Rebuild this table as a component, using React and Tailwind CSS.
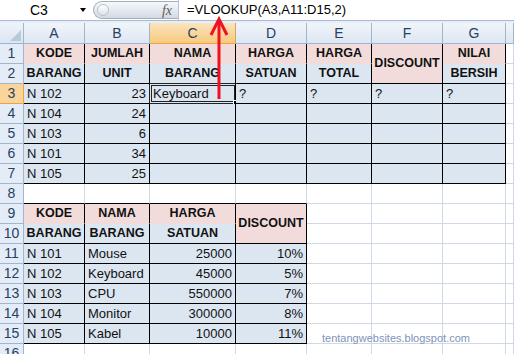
const PINK = 'pink';
const BLUE = 'blue';

// column widths: row header, A..G, then a sliver of H
const GRID = 'grid grid-cols-[24px_61px_65px_86px_71px_65px_71px_63px_8px] grid-rows-[21px_repeat(16,20px)]';

const upperHead1 = ['KODE', 'JUMLAH', 'NAMA', 'HARGA', 'HARGA', 'DISCOUNT', 'NILAI'];
const upperHead2 = ['BARANG', 'UNIT', 'BARANG', 'SATUAN', 'TOTAL', null, 'BERSIH'];
const stock = [
  ['N 102', '23'],
  ['N 104', '24'],
  ['N 103', '6'],
  ['N 101', '34'],
  ['N 105', '25'],
];
const products = [
  ['N 101', 'Mouse', '25000', '10%'],
  ['N 102', 'Keyboard', '45000', '5%'],
  ['N 103', 'CPU', '550000', '7%'],
  ['N 104', 'Monitor', '300000', '8%'],
  ['N 105', 'Kabel', '10000', '11%'],
];

// returns null for cells covered by a merged cell
function cellSpec(row, col) {
  const blank = { text: '', fill: null, rb: false, bb: false };
  // upper table A1:G7
  if (row <= 7 && col <= 6) {
    if (row === 1) {
      if (col === 5) return { text: 'DISCOUNT', fill: PINK, bold: true, align: 'center', rb: true, bb: true, span: true };
      return { text: upperHead1[col], fill: PINK, bold: true, align: 'center', rb: true, bb: false };
    }
    if (row === 2) {
      if (col === 5) return null;
      return { text: upperHead2[col], fill: BLUE, bold: true, align: 'center', rb: true, bb: true };
    }
    const r = stock[row - 3];
    let text = '';
    let align = 'left';
    if (col === 0) text = r[0];
    if (col === 1) { text = r[1]; align = 'right'; }
    if (row === 3 && col === 2) text = 'Keyboard';
    if (row === 3 && col >= 3) text = '?';
    return { text, fill: BLUE, align, rb: true, bb: true, selected: row === 3 && col === 2 };
  }
  // top edge of the lower table
  if (row === 8 && col <= 3) return { ...blank, bb: true };
  // lower table A9:D15
  if (row >= 9 && row <= 15 && col <= 3) {
    if (row === 9) {
      if (col === 3) return { text: 'DISCOUNT', fill: PINK, bold: true, align: 'center', rb: true, bb: true, span: true };
      return { text: ['KODE', 'NAMA', 'HARGA'][col], fill: PINK, bold: true, align: 'center', rb: true, bb: false };
    }
    if (row === 10) {
      if (col === 3) return null;
      return { text: ['BARANG', 'BARANG', 'SATUAN'][col], fill: BLUE, bold: true, align: 'center', rb: true, bb: true };
    }
    const p = products[row - 11];
    return { text: p[col], fill: BLUE, align: col >= 2 ? 'right' : 'left', rb: true, bb: true };
  }
  return blank;
}

function Cell({ spec }) {
  const bg = spec.fill === PINK ? 'bg-[#f2dcdb]' : spec.fill === BLUE ? 'bg-[#dce6f1]' : 'bg-white';
  const right = spec.rb ? 'border-r-black' : 'border-r-[#d0d7e5]';
  const bottom = spec.bb
    ? 'border-b-black'
    : spec.fill === PINK
      ? 'border-b-[#f2dcdb]'
      : spec.fill === BLUE
        ? 'border-b-[#dce6f1]'
        : 'border-b-[#d0d7e5]';
  const justify = spec.align === 'center' ? 'justify-center' : spec.align === 'right' ? 'justify-end' : 'justify-start';
  const weight = spec.bold ? 'font-bold text-[12.5px]' : 'text-[13px]';
  return (
    <div
      className={`relative flex items-center px-[3px] border-r border-b whitespace-nowrap text-[#111] ${bg} ${right} ${bottom} ${justify} ${weight} ${spec.span ? 'row-span-2' : ''}`}
    >
      {spec.text}
      {spec.selected && (
        <div className="absolute -left-[1px] -top-[1px] w-[88px] h-[21px] border-[3px] border-double border-[#222]">
          <div className="absolute -right-[4px] -bottom-[4px] w-[5px] h-[5px] bg-black border border-white" />
        </div>
      )}
    </div>
  );
}

function FormulaBar() {
  return (
    <div className="h-[20px] flex bg-white text-[13px] text-black">
      <div className="w-[93px] flex items-center">
        <span className="ml-[30px] text-[14px]">C3</span>
        <span className="ml-auto mr-[7px] w-0 h-0 border-x-[3.5px] border-x-transparent border-t-[4px] border-t-black" />
      </div>
      <div className="w-[85px] my-[1px] flex items-center rounded-l-full border border-r-0 border-[#a3aebb] bg-linear-to-b from-[#f7f9fb] to-[#d3dae3]">
        <span className="ml-[3px] w-[12px] h-[12px] rounded-full border border-[#b7c0cb] bg-linear-to-b from-[#ffffff] to-[#dde3ea]" />
        <span className="ml-auto mr-[6px] italic font-['Liberation_Serif',serif] text-[14px] text-[#606060]">fx</span>
      </div>
      <div className="flex-1 flex items-center pl-[8px] border-l border-[#b6c2d1]">
        =VLOOKUP(A3,A11:D15,2)
      </div>
    </div>
  );
}

function Sheet() {
  const cols = ['A', 'B', 'C', 'D', 'E', 'F', 'G', ''];
  const rows = Array.from({ length: 16 }, (_, i) => i + 1);
  return (
    <div className={GRID}>
      <div className="relative border-r border-b border-[#9eb6ce] bg-linear-to-b from-[#eef3fa] to-[#dce5f1]">
        <div className="absolute right-[2px] bottom-[2px] w-0 h-0 border-l-[11px] border-l-transparent border-b-[11px] border-b-[#b9c9dc]" />
      </div>
      {cols.map((c, i) =>
        i === 2 ? (
          <div key={c} className="flex items-center justify-center text-[14px] text-[#27415f] border-r border-r-[#d9a55a] border-b border-b-[#f0a43c] bg-linear-to-b from-[#fbe4bd] to-[#f6c97e]">
            {c}
          </div>
        ) : (
          <div key={i} className="flex items-center justify-center text-[14px] text-[#27415f] border-r border-b border-[#9eb6ce] bg-linear-to-b from-[#f1f5fb] to-[#dde6f2]">
            {c}
          </div>
        )
      )}
      {rows.map((r) => (
        <Row key={r} row={r} />
      ))}
    </div>
  );
}

function Row({ row }) {
  const head =
    row === 3
      ? 'bg-[#f9d59c] border-r-[#f0a23a] border-b-[#f0a23a]'
      : 'bg-[#e4ecf7] border-r-[#9eb6ce] border-b-[#9eb6ce]';
  const cells = [];
  for (let c = 0; c < 8; c++) {
    const spec = cellSpec(row, c);
    if (spec) cells.push(<Cell key={c} spec={spec} />);
  }
  return (
    <>
      <div className={`flex items-center justify-center text-[14px] text-[#27415f] border-r border-b ${head}`}>{row}</div>
      {cells}
    </>
  );
}

export default function App() {
  return (
    <div className="relative w-[514px] h-[354px] overflow-hidden bg-white font-['Liberation_Sans',Arial,sans-serif]">
      <FormulaBar />
      <div className="h-[1px] bg-[#a9bbd3]" />
      <div className="h-[2px] bg-[#e8eef6]" />
      <Sheet />

      {/* red pointer from C3 up to the formula */}
      <svg className="absolute left-0 top-0 pointer-events-none" width="514" height="354">
        <line x1="219" y1="21" x2="219" y2="99" stroke="#f01020" strokeWidth="3" />
        <polyline points="211,35 219,19 227,35" fill="none" stroke="#f01020" strokeWidth="3" />
      </svg>

      <div className="absolute left-[322px] top-[330px] text-[11px] text-[#8093b9] pointer-events-none">
        tentangwebsites.blogspot.com
      </div>
    </div>
  );
}
